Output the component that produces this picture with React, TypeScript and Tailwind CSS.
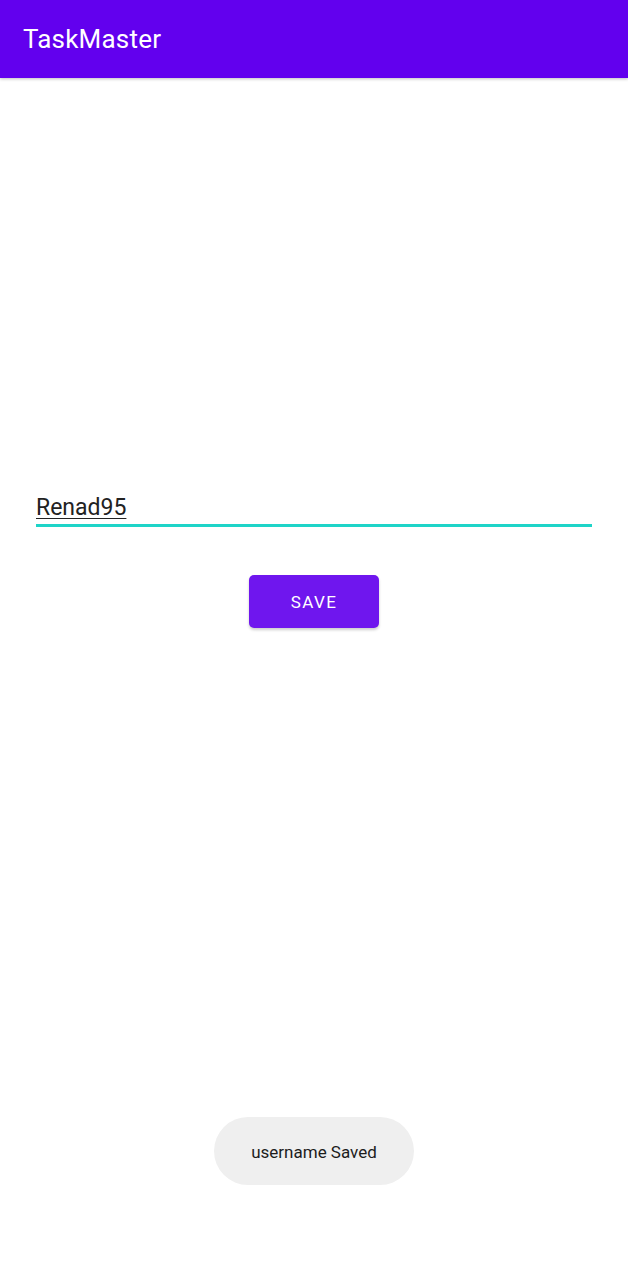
export default function App() {
  return (
    <div className="relative min-h-[1280px] bg-white" style={{ fontFamily: 'Roboto, "Noto Sans", sans-serif' }}>
      {/* App bar */}
      <header className="h-[78px] bg-[#6200ee] px-[23px] flex items-center shadow-[0_1px_3px_rgba(0,0,0,0.25)]">
        <h1 className="text-white text-[26px] font-normal tracking-[0.2px]">TaskMaster</h1>
      </header>

      <main className="px-[36px] pt-[415px]">
        {/* Username field */}
        <div className="flex flex-col">
          <span className="text-[23px] leading-[30px] text-[#222222] underline underline-offset-[3px] decoration-1 self-start">
            Renad95
          </span>
          <div className="mt-[1px] h-[3px] bg-[#1ed4c8]" />
        </div>

        <div className="flex justify-center mt-[48px]">
          <button className="w-[130px] h-[53px] pt-[2px] rounded-[5px] bg-[#6f16ee] text-white text-[17px] font-normal tracking-[1.4px] shadow-[0_2px_3px_rgba(0,0,0,0.2)]">
            SAVE
          </button>
        </div>
      </main>

      {/* Toast */}
      <div className="absolute left-[214px] top-[1117px] w-[200px] h-[68px] pt-[3px] rounded-full bg-[#efefef] flex items-center justify-center">
        <span className="text-[17px] text-[#1c1c1c]">username Saved</span>
      </div>
    </div>
  );
}
